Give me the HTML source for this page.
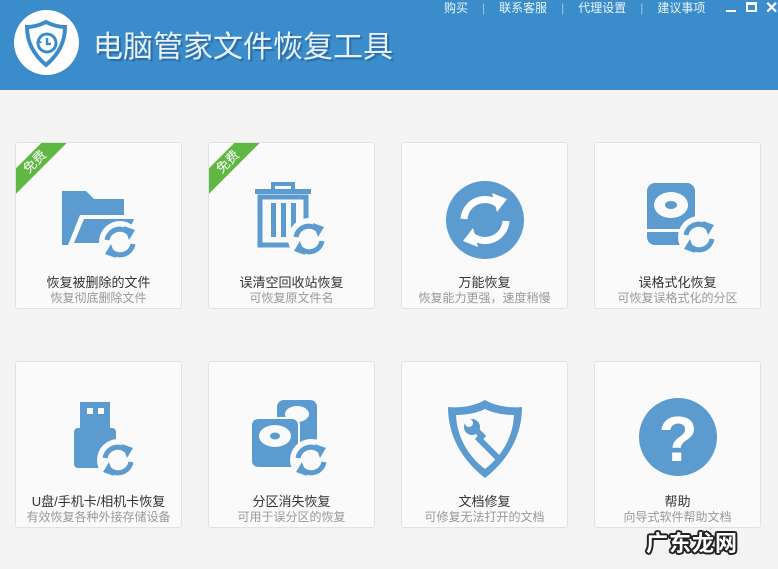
<!DOCTYPE html>
<html><head><meta charset="utf-8"><style>
*{margin:0;padding:0;box-sizing:border-box}
body{width:778px;height:569px;background:#f4f4f4;font-family:"Liberation Sans","Noto Sans CJK SC",sans-serif;position:relative;overflow:hidden}
.hd{position:absolute;left:0;top:0;width:778px;height:90px;background:#3a8dca}
.logo{position:absolute;left:14px;top:10px;width:65px;height:65px;border-radius:50%;background:#fff}
.title{position:absolute;left:93px;top:22px;font-size:30px;color:#e8f1fa;text-shadow:2px 2px 1px #2a6aa8}
.nav{position:absolute;top:0;left:444px;font-size:12px;color:#eaf3fb;line-height:16px;white-space:nowrap}
.nav span.s{color:#9cc8ea;margin:0 14px}
.card{position:absolute;width:167px;height:167px;background:#fafafa;border:1px solid #e2e2e2;border-radius:3px;overflow:hidden}
.card svg.ic{position:absolute;left:38px;top:34px}
.t{position:absolute;left:0;width:100%;top:129px;text-align:center;font-size:13px;color:#333}
.st{position:absolute;left:0;width:100%;top:146px;text-align:center;font-size:12px;color:#999}
.rib{position:absolute;left:-26px;top:10px;width:90px;height:18px;background:#5fb844;color:#fff;font-size:13px;text-align:center;line-height:18px;transform:rotate(-45deg)}
.wm{position:absolute;left:646px;top:526px;font-size:22px;font-weight:bold;color:#fff;letter-spacing:1px;text-shadow:-1.5px -1.5px 0 #222,1.5px -1.5px 0 #222,-1.5px 1.5px 0 #222,1.5px 1.5px 0 #222,0 2px 0 #222,2px 0 0 #222,-2px 0 0 #222,0 -2px 0 #222}
</style></head><body>
<div class="hd">
<div class="logo"><svg width="65" height="65" viewBox="0 0 65 65"><path d="M32 12 C24 16 17 17 13 17 C13 32 19 44 32 55 C45 44 51 32 51 17 C47 17 40 16 32 12Z" fill="none" stroke="#3a8dca" stroke-width="4"/><circle cx="33" cy="33" r="9" fill="none" stroke="#3a8dca" stroke-width="3"/><path d="M33 28v6h4" fill="none" stroke="#3a8dca" stroke-width="2.5"/><path d="M22 33l3-4 3 4z" fill="#3a8dca"/></svg></div>
<div class="title">电脑管家文件恢复工具</div>
<div class="nav">购买<span class="s">|</span>联系客服<span class="s">|</span>代理设置<span class="s">|</span>建议事项</div>
<div style="position:absolute;left:726px;top:10px;width:10px;height:2px;background:#fff"></div>
<div style="position:absolute;left:746px;top:2px;width:11px;height:10px;border:2px solid #fff;border-top-width:3px"></div>
<div style="position:absolute;left:765px;top:-2px;color:#fff;font-size:16px;font-weight:bold">✕</div>
</div>

<svg width="0" height="0" style="position:absolute"><defs>
<g id="sync"><circle cx="0" cy="0" r="21" fill="#fafafa"/><path d="M-13 -2 A13 13 0 0 1 9 -9" fill="none" stroke="#5b9bd0" stroke-width="5"/><path d="M4 -16 L15 -12 L9 -2Z" fill="#5b9bd0"/><path d="M13 2 A13 13 0 0 1 -9 9" fill="none" stroke="#5b9bd0" stroke-width="5"/><path d="M-4 16 L-15 12 L-9 2Z" fill="#5b9bd0"/></g>
</defs></svg>

<div class="card" style="left:15px;top:142px">
<div class="rib">免费</div>
<svg class="ic" width="90" height="90" viewBox="0 0 90 90"><path d="M8 14h24l8 8h30v46H8z" fill="#5b9bd0"/><path d="M14 68l12-30h58l-12 30z" fill="#fafafa"/><path d="M20 66l10-24h50l-10 24z" fill="#5b9bd0"/><use href="#sync" x="66" y="65"/></svg>
<div class="t">恢复被删除的文件</div><div class="st">恢复彻底删除文件</div></div>

<div class="card" style="left:208px;top:142px">
<div class="rib">免费</div>
<svg class="ic" width="90" height="90" viewBox="0 0 90 90"><rect x="8" y="12" width="56" height="5" fill="#5b9bd0"/><path d="M26 12v-5h20v5" fill="none" stroke="#5b9bd0" stroke-width="4"/><path d="M13 20h46v48H13z" fill="none" stroke="#5b9bd0" stroke-width="5"/><rect x="24" y="26" width="5" height="34" fill="#5b9bd0"/><rect x="34" y="26" width="5" height="34" fill="#5b9bd0"/><rect x="44" y="26" width="5" height="28" fill="#5b9bd0"/><use href="#sync" x="62" y="62"/></svg>
<div class="t">误清空回收站恢复</div><div class="st">可恢复原文件名</div></div>

<div class="card" style="left:401px;top:142px">
<svg class="ic" width="90" height="90" viewBox="0 0 90 90"><circle cx="45" cy="43" r="39" fill="#5b9bd0"/><path d="M24 42 A21 21 0 0 1 58 27" fill="none" stroke="#fff" stroke-width="7"/><path d="M52 16 L67 22 L57 35Z" fill="#fff"/><path d="M66 44 A21 21 0 0 1 32 59" fill="none" stroke="#fff" stroke-width="7"/><path d="M38 70 L23 64 L33 51Z" fill="#fff"/></svg>
<div class="t">万能恢复</div><div class="st">恢复能力更强，速度稍慢</div></div>

<div class="card" style="left:594px;top:142px">
<svg class="ic" width="90" height="90" viewBox="0 0 90 90"><rect x="14" y="6" width="48" height="62" rx="8" fill="#5b9bd0"/><ellipse cx="38" cy="28" rx="17" ry="13" fill="#fafafa"/><ellipse cx="38" cy="28" rx="6" ry="4" fill="#5b9bd0"/><rect x="14" y="52" width="48" height="3" fill="#fafafa"/><use href="#sync" x="66" y="60"/></svg>
<div class="t">误格式化恢复</div><div class="st">可恢复误格式化的分区</div></div>

<div class="card" style="left:15px;top:361px">
<svg class="ic" width="90" height="90" viewBox="0 0 90 90"><rect x="26" y="6" width="30" height="28" fill="#5b9bd0"/><rect x="33" y="12" width="6" height="6" fill="#fafafa"/><rect x="44" y="12" width="6" height="6" fill="#fafafa"/><rect x="20" y="32" width="42" height="40" rx="4" fill="#5b9bd0"/><use href="#sync" x="64" y="64"/></svg>
<div class="t">U盘/手机卡/相机卡恢复</div><div class="st">有效恢复各种外接存储设备</div></div>

<div class="card" style="left:208px;top:361px">
<svg class="ic" width="90" height="90" viewBox="0 0 90 90"><rect x="30" y="4" width="40" height="44" rx="7" fill="#5b9bd0"/><ellipse cx="50" cy="18" rx="12" ry="8" fill="#fafafa"/><rect x="4" y="22" width="48" height="50" rx="7" fill="#5b9bd0" stroke="#fafafa" stroke-width="2"/><ellipse cx="28" cy="40" rx="16" ry="11" fill="#fafafa"/><ellipse cx="28" cy="40" rx="5" ry="3.5" fill="#5b9bd0"/><use href="#sync" x="64" y="64"/></svg>
<div class="t">分区消失恢复</div><div class="st">可用于误分区的恢复</div></div>

<div class="card" style="left:401px;top:361px">
<svg class="ic" width="90" height="90" viewBox="0 0 90 90"><path d="M45 4 C33 11 18 12 8 11 C8 40 22 64 45 82 C68 64 82 40 82 11 C72 12 57 11 45 4Z" fill="#5b9bd0"/><path d="M45 13 C35 18 23 19 16 19 C17 41 28 60 45 73 C62 60 73 41 74 19 C67 19 55 18 45 13Z" fill="#fafafa"/><path d="M30 28 l12 12 -3 3 18 18" fill="none" stroke="#5b9bd0" stroke-width="6" stroke-linecap="round"/><circle cx="32" cy="31" r="8" fill="#5b9bd0"/><circle cx="29" cy="27" r="4" fill="#fafafa"/></svg>
<div class="t">文档修复</div><div class="st">可修复无法打开的文档</div></div>

<div class="card" style="left:594px;top:361px">
<svg class="ic" width="90" height="90" viewBox="0 0 90 90"><circle cx="45" cy="41" r="39" fill="#5b9bd0"/><text x="45" y="65" text-anchor="middle" font-family="Liberation Sans" font-weight="bold" font-size="64" fill="#fff">?</text></svg>
<div class="t">帮助</div><div class="st">向导式软件帮助文档</div></div>

<div class="wm">广东龙网</div>
</body></html>
